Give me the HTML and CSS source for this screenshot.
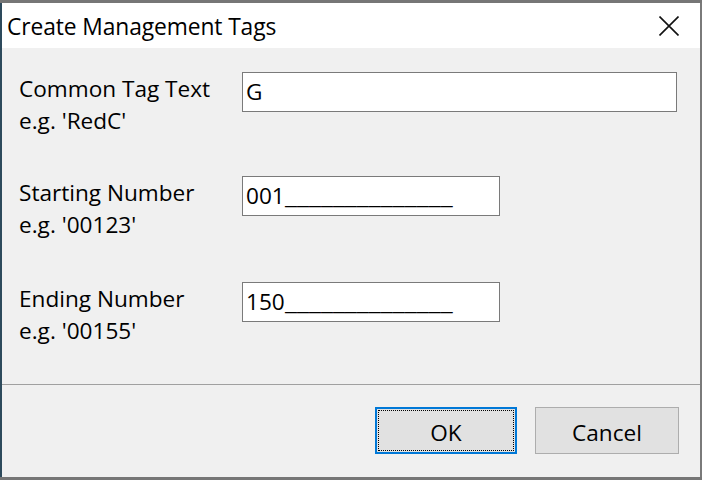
FILE: index.html
```html
<!DOCTYPE html>
<html>
<head>
<meta charset="utf-8">
<link rel="stylesheet" href="styles.css">
</head>
<body>
<div class="window">
  <div class="titlebar">
    <span class="title">Create Management Tags</span>
    <span class="close" aria-label="Close">
      <svg width="20" height="20" viewBox="0 0 20 20"><path d="M0.5 0.5 L19.5 19.5 M19.5 0.5 L0.5 19.5" stroke="#111" stroke-width="1.6" fill="none"/></svg>
    </span>
  </div>
  <div class="content">
    <div class="row">
      <div class="label">Common Tag Text<br>e.g. 'RedC'</div>
      <div class="field wide">G</div>
    </div>
    <div class="row">
      <div class="label">Starting Number<br>e.g. '00123'</div>
      <div class="field">001<span class="mask">______________</span></div>
    </div>
    <div class="row last">
      <div class="label">Ending Number<br>e.g. '00155'</div>
      <div class="field">150<span class="mask">______________</span></div>
    </div>
  </div>
  <div class="footer">
    <div class="btn default"><span class="focus">OK</span></div>
    <div class="btn">Cancel</div>
  </div>
</div>
</body>
</html>
```

FILE: styles.css
```css
html, body {
  margin: 0;
  padding: 0;
}
body {
  width: 702px;
  height: 480px;
  background: #767676;
  font-family: "Open Sans", "Noto Sans", sans-serif;
  color: #000;
  overflow: hidden;
}
.window {
  box-sizing: border-box;
  margin-top: 3px;
  width: 702px;
  height: 474px;
  border-left: 2px solid #2d4a5c;
  border-right: 2px solid #7a7a7a;
  background: #f0f0f0;
  display: flex;
  flex-direction: column;
}
.titlebar {
  height: 45px;
  background: #fff;
  display: flex;
  align-items: center;
  justify-content: space-between;
  padding: 0 21px 0 5px;
}
.title {
  font-size: 22.8px;
  letter-spacing: -0.1px;
  margin-top: 1px;
}
.close {
  display: flex;
  margin-top: 1px;
}
.content {
  height: 337px;
  box-sizing: border-box;
  padding: 24px 0 0 17px;
  border-bottom: 1px solid #a0a0a0;
  display: flex;
  flex-direction: column;
  gap: 39px;
}
.row {
  display: flex;
  align-items: flex-start;
}
.row.last {
  margin-top: 2px;
}
.label {
  width: 223px;
  font-size: 22.6px;
  line-height: 32px;
  margin-top: 1px;
}
.field {
  box-sizing: border-box;
  width: 258px;
  height: 40px;
  background: #fff;
  border: 1px solid #7a7a7a;
  font-size: 22.6px;
  line-height: 38px;
  padding-left: 3px;
  white-space: nowrap;
}
.mask {
  display: inline-block;
  transform: scaleX(1.21);
  transform-origin: left center;
}
.field.wide {
  width: 435px;
}
.footer {
  flex: 1;
  display: flex;
  justify-content: flex-end;
  align-items: flex-start;
  padding: 22px 21px 0 0;
  gap: 18px;
}
.btn {
  box-sizing: border-box;
  width: 144px;
  height: 47px;
  padding-top: 4px;
  background: #e1e1e1;
  border: 1px solid #adadad;
  font-size: 22.6px;
  display: flex;
  align-items: center;
  justify-content: center;
}
.btn.default {
  width: 142px;
  border: 2px solid #0078d7;
  padding: 1px;
}
.focus {
  box-sizing: border-box;
  flex: 1;
  align-self: stretch;
  padding-top: 3px;
  border: 1px dotted #000;
  display: flex;
  align-items: center;
  justify-content: center;
}
```
